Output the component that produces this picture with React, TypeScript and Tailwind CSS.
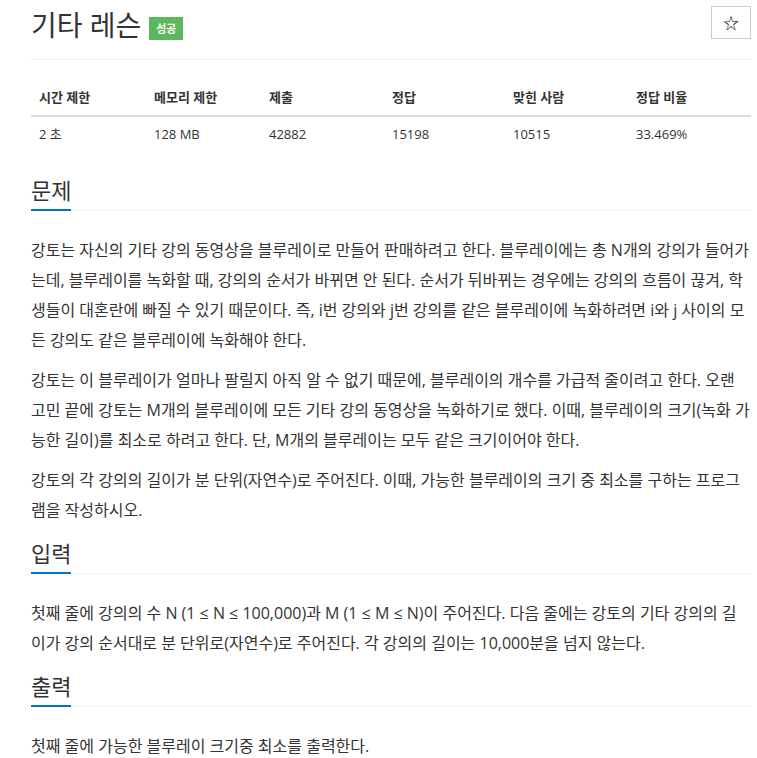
import React from 'react';

const stats = [
  { label: '시간 제한', value: '2 초', w: 'w-[115px]' },
  { label: '메모리 제한', value: '128 MB', w: 'w-[115px]' },
  { label: '제출', value: '42882', w: 'w-[123px]' },
  { label: '정답', value: '15198', w: 'w-[121px]' },
  { label: '맞힌 사람', value: '10515', w: 'w-[123px]' },
  { label: '정답 비율', value: '33.469%', w: 'w-[123px]' },
];

const Section = ({ title, children }: { title: string; children: React.ReactNode }) => (
  <section>
    <div className="border-b border-dotted border-[#dbe3ee]">
      <h2 className="inline-block text-[22px] leading-[34px] pt-[1px] pb-[2px] border-b-2 border-[#0076c0] -mb-px text-[#333]">
        {title}
      </h2>
    </div>
    <div className="pt-[24px] text-[16px] leading-[30px] text-[#333]">{children}</div>
  </section>
);

const App = () => {
  return (
    <div
      className="min-h-screen bg-white"
      style={{ fontFamily: '"Open Sans", "Noto Sans CJK KR", sans-serif' }}
    >
      <div className="ml-[31px] w-[720px]">
        {/* header */}
        <div className="flex items-start justify-between pt-[6px] pb-[18px] border-b border-[#eee]">
          <div className="flex items-center gap-[8px] pt-[3px]">
            <h1 className="text-[28px] leading-[32px] text-[#333]">기타 레슨</h1>
            <span className="w-[34px] text-center bg-[#5cb85c] text-white text-[11px] font-bold leading-[23px] mt-[6px]">성공</span>
          </div>
          <button className="w-[40px] h-[33px] border border-[#ccc] flex items-center justify-center text-[16px] text-[#222]">
            ☆
          </button>
        </div>

        {/* stats table */}
        <table className="mt-[19px] w-[720px] text-[13px] text-[#333] border-collapse">
          <thead>
            <tr className="border-b-2 border-[#ddd]">
              {stats.map((s) => (
                <th key={s.label} className={`${s.w} text-left font-bold px-[8px] py-[8px] leading-[20px]`}>
                  {s.label}
                </th>
              ))}
            </tr>
          </thead>
          <tbody>
            <tr>
              {stats.map((s) => (
                <td key={s.label} className="px-[8px] py-[7px] leading-[20px]">
                  {s.value}
                </td>
              ))}
            </tr>
          </tbody>
        </table>

        <div className="mt-[21px] flex flex-col">
          <Section title="문제">
            <p className="mb-[10px]">
              강토는 자신의 기타 강의 동영상을 블루레이로 만들어 판매하려고 한다. 블루레이에는 총 N개의 강의가 들어가는데, 블루레이를 녹화할 때, 강의의 순서가 바뀌면 안 된다. 순서가 뒤바뀌는 경우에는 강의의 흐름이 끊겨, 학생들이 대혼란에 빠질 수 있기 때문이다. 즉, i번 강의와 j번 강의를 같은 블루레이에 녹화하려면 i와 j 사이의 모든 강의도 같은 블루레이에 녹화해야 한다.
            </p>
            <p className="mb-[10px]">
              강토는 이 블루레이가 얼마나 팔릴지 아직 알 수 없기 때문에, 블루레이의 개수를 가급적 줄이려고 한다. 오랜 고민 끝에 강토는 M개의 블루레이에 모든 기타 강의 동영상을 녹화하기로 했다. 이때, 블루레이의 크기(녹화 가능한 길이)를 최소로 하려고 한다. 단, M개의 블루레이는 모두 같은 크기이어야 한다.
            </p>
            <p className="mb-[10px]">
              강토의 각 강의의 길이가 분 단위(자연수)로 주어진다. 이때, 가능한 블루레이의 크기 중 최소를 구하는 프로그램을 작성하시오.
            </p>
          </Section>
          <Section title="입력">
            <p className="mb-[10px]">
              첫째 줄에 강의의 수 N (1 ≤ N ≤ 100,000)과 M (1 ≤ M ≤ N)이 주어진다. 다음 줄에는 강토의 기타 강의의 길이가 강의 순서대로 분 단위로(자연수)로 주어진다. 각 강의의 길이는 10,000분을 넘지 않는다.
            </p>
          </Section>
          <Section title="출력">
            <p className="mb-[10px]">첫째 줄에 가능한 블루레이 크기중 최소를 출력한다.</p>
          </Section>
        </div>
      </div>
    </div>
  );
};

export default App;
